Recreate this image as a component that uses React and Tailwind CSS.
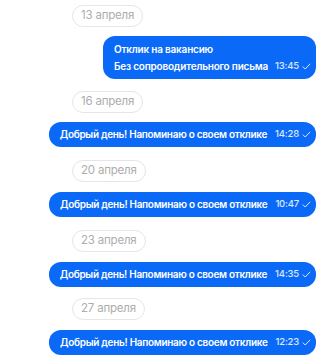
import { Fragment } from "react";

const days = [
  { date: "13 апреля", time: "13:45", title: "Отклик на вакансию", text: "Без сопроводительного письма", pillMt: "", bubbleMt: "mt-[9px]" },
  { date: "16 апреля", time: "14:28", text: "Добрый день! Напоминаю о своем отклике", pillMt: "mt-[12px]", bubbleMt: "mt-[9px]" },
  { date: "20 апреля", time: "10:47", text: "Добрый день! Напоминаю о своем отклике", pillMt: "mt-[13px]", bubbleMt: "mt-[10px]" },
  { date: "23 апреля", time: "14:35", text: "Добрый день! Напоминаю о своем отклике", pillMt: "mt-[13px]", bubbleMt: "mt-[10px]" },
  { date: "27 апреля", time: "12:23", text: "Добрый день! Напоминаю о своем отклике", pillMt: "mt-[11px]", bubbleMt: "mt-[10px]" },
];

function Check() {
  return (
    <svg width="9" height="7" viewBox="0 0 9 7" fill="none" className="ml-[3px]">
      <path d="M0.8 3.6 L3.2 6 L8.2 0.8" stroke="rgba(255,255,255,0.85)" strokeWidth="1" />
    </svg>
  );
}

export default function App() {
  return (
    <div
      className="w-[324px] h-[364px] bg-white overflow-hidden flex flex-col pt-[5px]"
      style={{ fontFamily: "Inter, 'Noto Sans', sans-serif" }}
    >
      {days.map((d) => (
        <Fragment key={d.date}>
          <div
            className={`ml-[72px] self-start h-[22px] px-[8px] flex items-center rounded-full border border-[#e6e6e6] text-[11.5px] text-[#adadad] tracking-[-0.2px] ${d.pillMt}`}
          >
            {d.date}
          </div>
          <div className={`self-end mr-[8px] ${d.bubbleMt} bg-[#0a6af7] text-white rounded-[12px] pl-[11px] pr-[5px]`}>
            {d.title ? (
              <div className="pt-[6px] pb-[6px]">
                <div className="text-[10px] font-semibold leading-[14px] tracking-[-0.2px]">{d.title}</div>
                <div className="flex items-center mt-[3px] h-[14px]">
                  <span className="text-[10px] font-semibold tracking-[-0.2px]">{d.text}</span>
                  <span className="ml-[7px] text-[9.5px] font-medium tracking-[-0.2px] text-white/85">{d.time}</span>
                  <Check />
                </div>
              </div>
            ) : (
              <div className="flex items-center h-[25px]">
                <span className="text-[10px] font-semibold tracking-[-0.3px]">{d.text}</span>
                <span className="ml-[8px] text-[9.5px] font-medium tracking-[-0.2px] text-white/85">{d.time}</span>
                <Check />
              </div>
            )}
          </div>
        </Fragment>
      ))}
    </div>
  );
}
